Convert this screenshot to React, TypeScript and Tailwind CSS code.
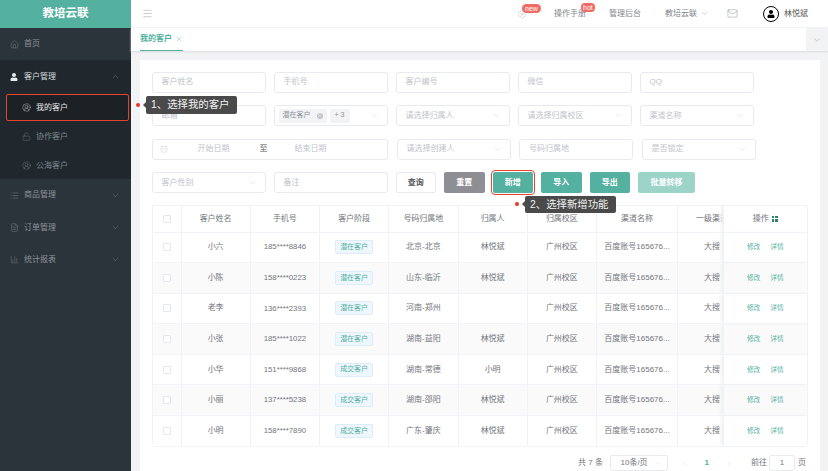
import { BarChart3, CalendarDays, ChevronDown, ChevronLeft, ChevronRight, ChevronUp, CircleUserRound, FileText, House, List, LockOpen, Mail, Menu, Settings, X } from "lucide-react";
import { FaUser } from "react-icons/fa";
import { ReactNode } from "react";

const rows = [
  ["小六", "185****8846", "潜在客户", "北京-北京", "林悦斌"],
  ["小陈", "158****0223", "潜在客户", "山东-临沂", "林悦斌"],
  ["老李", "136****2393", "潜在客户", "河南-郑州", ""],
  ["小张", "185****1022", "潜在客户", "湖南-益阳", "林悦斌"],
  ["小华", "151****9868", "成交客户", "湖南-常德", "小明"],
  ["小丽", "137****5238", "成交客户", "湖南-邵阳", "林悦斌"],
  ["小明", "158****7890", "成交客户", "广东-肇庆", "林悦斌"],
];

const Field = ({ text, select }: { text: string; select?: boolean }) => (
  <div className="w-[114px] h-[21px] shrink-0 border border-[#e8eaef] rounded-[3px] bg-white flex items-center justify-between pl-[9px] pr-[8px] text-[8px] text-[#c0c4cc]">
    <span>{text}</span>
    {select && <ChevronDown size={9} strokeWidth={1} />}
  </div>
);

const Btn = ({ children, className = "" }: { children: ReactNode; className?: string }) => (
  <div className={`h-[21px] w-[40.5px] shrink-0 rounded-[2px] flex items-center justify-center text-[8px] font-bold text-white ${className}`}>{children}</div>
);

const Cell = ({ children, w, className = "" }: { children?: ReactNode; w: string; className?: string }) => (
  <div className={`${w} shrink-0 h-full flex items-center justify-center border-r border-[#f0f2f6] whitespace-nowrap overflow-hidden ${className}`}>{children}</div>
);

const Check = () => <div className="w-[8px] h-[8px] border border-[#e4e7ed] rounded-[1px] bg-white" />;

const MenuRow = ({ icon, text, open }: { icon: ReactNode; text: string; open?: boolean }) => (
  <div className="h-[32.4px] flex items-center pl-[10px] pr-[11px] text-[8px] text-[#8b9299]">
    <span className="w-[14px] flex items-center">{icon}</span>
    <span>{text}</span>
    {open && <ChevronDown size={9} strokeWidth={1} className="ml-auto" />}
  </div>
);

const SubRow = ({ icon, text }: { icon: ReactNode; text: string }) => (
  <div className="h-[29px] flex items-center pl-[22px] text-[8px] text-[#7e858c]">
    <span className="w-[14px] flex items-center">{icon}</span>
    <span>{text}</span>
  </div>
);

const Tip = ({ text, className }: { text: string; className: string }) => (
  <div className={`absolute flex items-center z-20 ${className}`}>
    <span className="w-[4px] h-[4px] rounded-full bg-[#ee3524] mr-[3.5px]" />
    <span className="w-0 h-0 border-y-[3px] border-y-transparent border-r-[3.5px] border-r-[#4a4a4a]" />
    <span className="w-[91px] h-[17.5px] pl-[5px] rounded-[2px] bg-[#4a4a4a] text-[#f2f2f2] text-[10.4px] leading-[17.5px] whitespace-nowrap">{text}</span>
  </div>
);

const App = () => {
  return (
    <div className="relative w-[828px] h-[471px] overflow-hidden flex bg-[#f2f3f5] font-['Liberation_Sans','Noto_Sans_CJK_SC',sans-serif]">
      <aside className="w-[131px] shrink-0 bg-[#2b343b] flex flex-col">
        <div className="h-[28px] bg-[#54b09f] text-white text-[11.5px] font-bold flex items-center justify-center">教培云联</div>
        <MenuRow icon={<House size={9} strokeWidth={1} />} text="首页" />
        <div className="bg-[#20282e] h-[118.6px]">
          <div className="h-[33px] flex items-center pl-[10px] pr-[11px] text-[8px] text-[#d5d8da]">
            <span className="w-[14px] flex items-center"><FaUser size={8} className="text-[#e8eaeb]" /></span>
            <span>客户管理</span>
            <ChevronUp size={9} strokeWidth={1} className="ml-auto text-[#8b9299]" />
          </div>
          <div className="ml-[6px] w-[123px] h-[27px] my-[1px] rounded-[2px] border border-[#e8412c] bg-[#1c2126] flex items-center pl-[15px] text-[8px] text-[#e4e6e8]">
            <span className="w-[14px] flex items-center"><CircleUserRound size={9} strokeWidth={1} /></span>
            <span>我的客户</span>
          </div>
          <SubRow icon={<LockOpen size={9} strokeWidth={1} />} text="协作客户" />
          <SubRow icon={<CircleUserRound size={9} strokeWidth={1} />} text="公海客户" />
        </div>
        <MenuRow open icon={<List size={9} strokeWidth={1} />} text="商品管理" />
        <MenuRow open icon={<FileText size={9} strokeWidth={1} />} text="订单管理" />
        <MenuRow open icon={<BarChart3 size={9} strokeWidth={1} />} text="统计报表" />
      </aside>

      <main className="flex-1 min-w-0 flex flex-col">
        <header className="h-[28px] shrink-0 bg-white flex items-center text-[8px] text-[#80858c] border-b border-[#f2f3f5]">
          <Menu size={11} strokeWidth={1} className="ml-[11px] text-[#8a8f94]" />
          <div className="ml-auto flex items-center">
            <div className="relative">
              <Settings size={10} strokeWidth={1} className="text-[#b5b8bc]" />
              <span className="absolute left-[5px] -top-[5px] h-[9px] px-[3px] rounded-[5px] bg-[#ee6c64] text-white text-[7px] leading-[9px]">new</span>
            </div>
            <div className="relative ml-[27px]">
              操作手册
              <span className="absolute left-[27px] -top-[5px] h-[9px] px-[2px] rounded-[4px] bg-[#ee6c64] text-white text-[7px] leading-[9px]">hot</span>
            </div>
            <span className="ml-[23px]">管理后台</span>
            <span className="ml-[24px]">教培云联</span>
            <ChevronDown size={9} strokeWidth={1} className="ml-[3px]" />
            <Mail size={11} strokeWidth={1} className="ml-[18px]" />
            <div className="ml-[25px] w-[16px] h-[16px] rounded-full border-[1.5px] border-black flex items-center justify-center">
              <FaUser size={8} className="text-black" />
            </div>
            <span className="ml-[5px] mr-[20px] text-[#555]">林悦斌</span>
          </div>
        </header>
        <div className="h-[23px] shrink-0 bg-white flex items-stretch shadow-[0_1px_2px_#d8dadd] relative">
          <div className="ml-[9px] w-[43px] border-b border-[#54b09f] flex items-center gap-[3px] text-[8px] font-bold text-[#54b09f]">
            我的客户<X size={8} strokeWidth={1.5} className="text-[#7fc2b5]" />
          </div>
          <div className="ml-auto w-[22px] bg-[#f2f3f5] flex items-center justify-center text-[#8a8f94]">
            <ChevronDown size={10} strokeWidth={1} />
          </div>
        </div>
        <section className="flex-1 min-h-0 mt-[9px] ml-[9px] mr-[8px] bg-white pt-[11.5px] pl-[11.5px] text-[8px]">
          <div className="flex gap-[8px]">
            <Field text="客户姓名" />
            <Field text="手机号" />
            <Field text="客户编号" />
            <Field text="微信" />
            <Field text="QQ" />
          </div>
          <div className="flex gap-[8px] mt-[12.5px]">
            <Field text="邮箱" />
            <div className="w-[114px] h-[21px] shrink-0 border border-[#e8eaef] rounded-[3px] flex items-center pl-[4px] pr-[8px] text-[7px] text-[#8d9197]">
              <span className="h-[14px] px-[4px] rounded-[2px] bg-[#f2f3f5] flex items-center gap-[6px]">
                潜在客户
                <span className="w-[6px] h-[6px] rounded-full bg-[#c0c4cc] flex items-center justify-center text-white"><X size={5} strokeWidth={2} /></span>
              </span>
              <span className="h-[14px] w-[20px] ml-[3px] rounded-[2px] bg-[#f2f3f5] flex items-center justify-center">+ 3</span>
              <ChevronDown size={9} strokeWidth={1} className="ml-auto text-[#c0c4cc]" />
            </div>
            <Field select text="请选择归属人" />
            <Field select text="请选择归属校区" />
            <Field select text="渠道名称" />
          </div>
          <div className="flex gap-[8.5px] mt-[12.5px]">
            <div className="w-[236.5px] h-[21px] shrink-0 border border-[#e8eaef] rounded-[3px] flex items-center pl-[7px] text-[#c0c4cc]">
              <CalendarDays size={8} strokeWidth={1} />
              <span className="ml-[30px]">开始日期</span>
              <span className="ml-[30px] text-[#555]">至</span>
              <span className="ml-[27px]">结束日期</span>
            </div>
            <Field select text="请选择创建人" />
            <Field text="号码归属地" />
            <Field select text="是否锁定" />
          </div>
          <div className="flex gap-[8px] mt-[12.5px]">
            <Field select text="客户性别" />
            <Field text="备注" />
            <Btn className="!text-[#555] border border-[#e8eaef]">查询</Btn>
            <Btn className="bg-[#8e8f94]">重置</Btn>
            <Btn className="bg-[#54b09f] outline outline-1 outline-offset-[1px] outline-[#e8412c]">新增</Btn>
            <Btn className="bg-[#54b09f]">导入</Btn>
            <Btn className="bg-[#54b09f]">导出</Btn>
            <Btn className="bg-[#9cd4c9] !w-[57px]">批量转移</Btn>
          </div>

          <div className="mt-[12px] w-[656px] h-[240px] border border-[#f0f2f6] text-[#72767c]">
            <div className="h-[26.5px] flex border-b border-[#f0f2f6]">
              <Cell w="w-[29px]"><Check /></Cell>
              <Cell w="w-[69.25px]">客户姓名</Cell>
              <Cell w="w-[69.25px]">手机号</Cell>
              <Cell w="w-[69.25px]">客户阶段</Cell>
              <Cell w="w-[69.25px]">号码归属地</Cell>
              <Cell w="w-[69.25px]">归属人</Cell>
              <Cell w="w-[69.25px]">归属校区</Cell>
              <Cell w="w-[81px]">渠道名称</Cell>
              <Cell w="w-[44.5px]" className="!justify-start pl-[18px] border-r-0">一级渠道</Cell>
              <Cell w="w-[84.5px]" className="border-r-0 border-l border-[#eef0f3] shadow-[-2px_0_3px_#f0f1f3] gap-[3px]">
                操作
                <span className="grid grid-cols-2 gap-[1px]">
                  <i className="w-[2.5px] h-[2.5px] bg-[#2f7f70]" /><i className="w-[2.5px] h-[2.5px] bg-[#2f7f70]" />
                  <i className="w-[2.5px] h-[2.5px] bg-[#2f7f70]" /><i className="w-[2.5px] h-[2.5px] bg-[#2f7f70]" />
                </span>
              </Cell>
            </div>
            {rows.map((r, i) => (
              <div key={r[0]} className={`h-[30.6px] flex border-b border-[#f3f4f7] ${i % 2 ? "bg-[#fafafa]" : "bg-white"}`}>
                <Cell w="w-[29px]"><Check /></Cell>
                <Cell w="w-[69.25px]">{r[0]}</Cell>
                <Cell w="w-[69.25px]" className="text-[7.8px]">{r[1]}</Cell>
                <Cell w="w-[69.25px]">
                  <span className="h-[14px] w-[38px] rounded-[2px] bg-[#eef7fd] border border-[#dcecf8] text-[#54b09f] text-[7px] flex items-center justify-center">{r[2]}</span>
                </Cell>
                <Cell w="w-[69.25px]">{r[3]}</Cell>
                <Cell w="w-[69.25px]">{r[4]}</Cell>
                <Cell w="w-[69.25px]">广州校区</Cell>
                <Cell w="w-[81px]">百度账号165676...</Cell>
                <Cell w="w-[44.5px]" className="!justify-start pl-[26px] border-r-0">大搜</Cell>
                <Cell w="w-[84.5px]" className="border-r-0 border-l border-[#eef0f3] shadow-[-2px_0_3px_#f0f1f3] gap-[10px] text-[#54b09f] text-[6.7px]">
                  <span>修改</span><span>详情</span>
                </Cell>
              </div>
            ))}
          </div>

          <div className="mt-[10px] h-[16px] flex items-center text-[#72767c] pl-[426.5px]">
            <span className="shrink-0 w-[23px] whitespace-nowrap">共 7 条</span>
            <span className="ml-[8.5px] shrink-0 w-[58px] h-[16px] border border-[#e8eaef] rounded-[2px] flex items-center justify-between pl-[10px] pr-[5px]">10条/页<ChevronDown size={7} strokeWidth={1} className="text-[#c0c4cc]" /></span>
            <ChevronLeft size={8} strokeWidth={1} className="shrink-0 ml-[13px] text-[#c0c4cc]" />
            <span className="shrink-0 ml-[16px] font-bold text-[#54b09f]">1</span>
            <ChevronRight size={8} strokeWidth={1} className="shrink-0 ml-[16px] text-[#c0c4cc]" />
            <span className="shrink-0 ml-[18px]">前往</span>
            <span className="shrink-0 ml-[2px] w-[26px] h-[16px] border border-[#e8eaef] rounded-[2px] flex items-center justify-center">1</span>
            <span className="shrink-0 ml-[3px]">页</span>
          </div>
        </section>
      </main>

      <Tip text="1、选择我的客户" className="left-[135.5px] top-[96px]" />
      <Tip text="2、选择新增功能" className="left-[514.5px] top-[195.5px]" />
    </div>
  );
};

export default App;
